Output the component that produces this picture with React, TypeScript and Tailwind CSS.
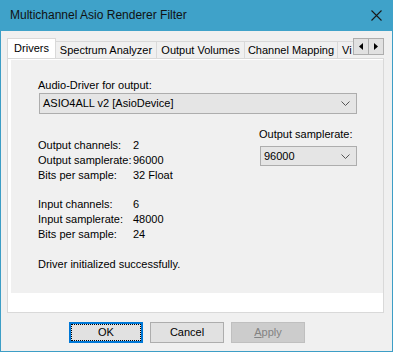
import React from "react";

const tabs = [
  { name: "Spectrum Analyzer", w: "w-[101px] justify-center" },
  { name: "Output Volumes", w: "w-[88px] justify-center" },
  { name: "Channel Mapping", w: "w-[93px] justify-center" },
  { name: "Vi", w: "w-[30px] justify-start pl-[4px]" },
];

const outputInfo = [
  ["Output channels:", "2"],
  ["Output samplerate:", "96000"],
  ["Bits per sample:", "32 Float"],
];

const inputInfo = [
  ["Input channels:", "6"],
  ["Input samplerate:", "48000"],
  ["Bits per sample:", "24"],
];

const Chevron = () => (
  <svg width="9" height="5" viewBox="0 0 9 5" className="shrink-0">
    <path d="M0.5 0.5 L4.5 4.5 L8.5 0.5" fill="none" stroke="#555" strokeWidth="1" />
  </svg>
);

const Combo = ({ value, className }: { value: string; className: string }) => (
  <div
    className={`flex items-center justify-between border border-[#adadad] bg-[#e5e5e5] pl-[3px] pr-[6px] ${className}`}
  >
    <span>{value}</span>
    <Chevron />
  </div>
);

const InfoRows = ({ rows }: { rows: string[][] }) => (
  <div className="flex flex-col">
    {rows.map(([label, value], i) => (
      <div key={i} className="flex h-[15px] items-center whitespace-nowrap">
        <span className="w-[95px]">{label}</span>
        <span>{value}</span>
      </div>
    ))}
  </div>
);

export default function App() {
  return (
    <div className="flex h-[352px] w-[393px] flex-col border-x border-b border-[#3d9ec6] bg-[#f0f0f0] font-['Liberation_Sans',Arial,sans-serif] text-[11px] leading-[15px] text-black">
      {/* title bar */}
      <div className="-mx-px flex h-[31px] shrink-0 items-center justify-between bg-[#3fa2c9] pl-[10px] pr-[11px]">
        <span className="text-[12px] text-[#111]">Multichannel Asio Renderer Filter</span>
        <svg width="11" height="11" viewBox="0 0 11 11">
          <path d="M0.5 0.5 L10.5 10.5 M10.5 0.5 L0.5 10.5" stroke="#1a1a1a" strokeWidth="1.1" />
        </svg>
      </div>

      <div className="flex flex-col pl-[6px] pt-[7px]">
        {/* tab strip */}
        <div className="flex h-[20px]">
          <div className="flex w-[346px] items-end overflow-hidden">
            <div className="relative z-10 mb-[-1px] flex h-[21px] w-[49px] shrink-0 items-center justify-center border-x border-t border-[#d9d9d9] bg-white pb-[1px]">
              Drivers
            </div>
            {tabs.map((tab) => (
              <div
                key={tab.name}
                className={`flex h-[17px] shrink-0 items-center border-t border-r border-[#d9d9d9] bg-[#f0f0f0] pt-[1px] ${tab.w}`}
              >
                {tab.name}
              </div>
            ))}
          </div>
          <div className="flex h-[17px] self-start border border-[#adadad] bg-[#e1e1e1]">
            <div className="flex w-[15px] items-center justify-center border-r border-[#adadad]">
              <svg width="4" height="7" viewBox="0 0 4 7">
                <path d="M4 0 L0 3.5 L4 7 Z" fill="#000" />
              </svg>
            </div>
            <div className="flex w-[14px] items-center justify-center">
              <svg width="4" height="7" viewBox="0 0 4 7">
                <path d="M0 0 L4 3.5 L0 7 Z" fill="#000" />
              </svg>
            </div>
          </div>
        </div>

        {/* tab panel */}
        <div className="h-[255px] w-[377px] border border-[#d9d9d9] bg-white pb-[19px] pl-[3px] pt-[1px]">
          <div className="flex h-full flex-col bg-[#f0f0f0] pl-[27px] pt-[18px]">
            <span>Audio-Driver for output:</span>
            <Combo value="ASIO4ALL v2 [AsioDevice]" className="ml-px h-[21px] w-[318px]" />

            <div className="mt-[13px] flex">
              <div className="flex w-[221px] flex-col pt-[11px]">
                <InfoRows rows={outputInfo} />
                <div className="mt-[14px]">
                  <InfoRows rows={inputInfo} />
                </div>
                <span className="mt-[15px] whitespace-nowrap">Driver initialized successfully.</span>
              </div>
              <div className="flex flex-col">
                <span>Output samplerate:</span>
                <Combo value="96000" className="ml-px mt-[4px] h-[20px] w-[97px]" />
              </div>
            </div>
          </div>
        </div>

        {/* buttons */}
        <div className="ml-[62px] mt-[9px] flex gap-[7px]">
          <button className="h-[21px] w-[74px] border-2 border-[#0078d7] bg-[#e1e1e1] outline-1 outline-offset-[-3px] outline-dotted outline-black">
            OK
          </button>
          <button className="h-[21px] w-[74px] border border-[#adadad] bg-[#e1e1e1]">Cancel</button>
          <button className="h-[21px] w-[74px] border border-[#bfbfbf] bg-[#cccccc] text-[#838383]">
            <span className="underline">A</span>pply
          </button>
        </div>
      </div>
    </div>
  );
}
